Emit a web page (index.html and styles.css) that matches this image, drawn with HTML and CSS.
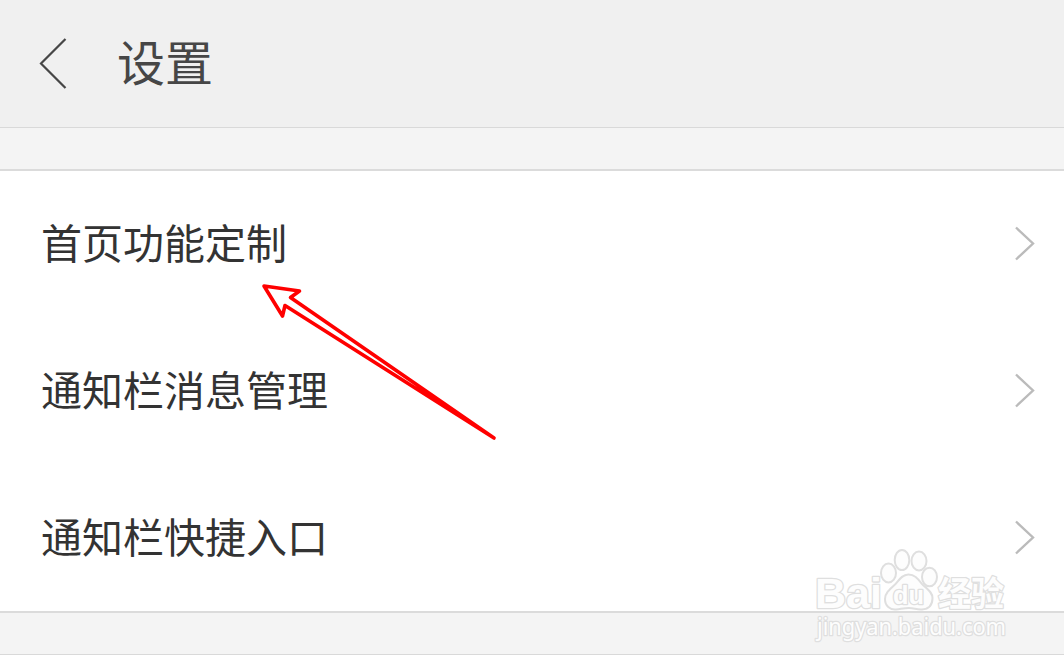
FILE: index.html
```html
<!DOCTYPE html>
<html lang="zh-CN">
<head>
  <title>设置</title>
  <meta charset="utf-8">
  <link rel="stylesheet" href="styles.css">
</head>
<body>

  <div class="header">
    <svg class="back" width="30" height="54" viewBox="0 0 30 54">
      <path d="M27.500 2 L3 26.500 L27.500 51"/>
    </svg>
    <h1>设置</h1>
  </div>

  <div class="spacer"></div>

  <ul class="settings-list">
    <li>
      <span>首页功能定制</span>
      <svg class="chevron" width="22" height="36" viewBox="0 0 22 36"><path d="M2 1.500 L19 17.500 L2 33.500"/></svg>
    </li>
    <li>
      <span>通知栏消息管理</span>
      <svg class="chevron" width="22" height="36" viewBox="0 0 22 36"><path d="M2 1.500 L19 17.500 L2 33.500"/></svg>
    </li>
    <li>
      <span>通知栏快捷入口</span>
      <svg class="chevron" width="22" height="36" viewBox="0 0 22 36"><path d="M2 1.500 L19 17.500 L2 33.500"/></svg>
    </li>
  </ul>

  <div class="spacer bottom"></div>

  <!-- Arrow pointing at the first item -->
  <svg class="arrow" width="240" height="162" viewBox="260 280 240 162">
    <path d="M494 438 L290.500 297.500 L299.500 291 L264 286 L282.500 316 L285 305.500 Z"/>
  </svg>

  <!-- Watermark -->
  <svg class="watermark" width="214" height="110" viewBox="810 545 214 110">
    <g class="mark">
      <text class="latin" x="815" y="608" textLength="67" lengthAdjust="spacingAndGlyphs">Bai</text>
      <ellipse cx="888.500" cy="573" rx="7.500" ry="9.500"/>
      <ellipse cx="902" cy="560" rx="7.300" ry="10"/>
      <ellipse cx="919" cy="561" rx="7.500" ry="9.500"/>
      <ellipse cx="929.500" cy="577" rx="7.500" ry="9.300"/>
      <path d="M908.500 574.500 C902 574.500 899 580 895.500 584 C890 589 885 593 885 599 C885 606 890 610 896 609.500 C901 609 904 608 909 608 C914 608 917 610 922 609.500 C929 609 932.500 605 932.500 598 C932.500 592 927 589 922 584 C918 579 915 574.500 908.500 574.500 Z"/>
      <text class="du" x="893" y="604" textLength="31" lengthAdjust="spacingAndGlyphs">du</text>
      <text class="cjk" x="938" y="606" textLength="66" lengthAdjust="spacingAndGlyphs">经验</text>
      <text class="url" x="817" y="635" textLength="189" lengthAdjust="spacingAndGlyphs">jingyan.baidu.com</text>
    </g>
  </svg>

</body>
</html>
```
FILE: styles.css
```css
/* General Page Styling */
body {
  font-family: "Noto Sans CJK SC", sans-serif;
  background-color: #fff;
  color: #333;
  margin: 0;
  position: relative;
  height: 664px;
  overflow: hidden;
}

svg {
  fill: none;
}

/* Header */
.header {
  display: flex;
  align-items: center;
  box-sizing: border-box;
  height: 128px;
  padding-left: 38px;
  background-color: #f0f0f0;
  border-bottom: 1px solid #d9d9d9;
}

h1 {
  margin: 0 0 0 49px;
  padding-bottom: 8px;
  font-size: 48px;
  font-weight: 400;
  line-height: 72px;
  color: #464646;
}

.back {
  stroke: #464646;
  stroke-width: 2.2;
}

.spacer {
  height: 41px;
  background-color: #f4f4f4;
}

.bottom {
  border-bottom: 1px solid #d9d9d9;
}

/* Settings List */
.settings-list {
  box-sizing: border-box;
  list-style-type: none;
  margin: 0;
  padding: 0;
  height: 444px;
  background-color: #fff;
  border-top: 2px solid #dbdbdb;
  border-bottom: 2px solid #dbdbdb;
}

li {
  display: flex;
  align-items: center;
  justify-content: space-between;
  box-sizing: border-box;
  height: 147px;
  padding: 0 28px 2px 41px;
  font-size: 41px;
  line-height: 60px;
}

li span {
  padding-bottom: 5px;
}

.chevron {
  stroke: #bbb;
  stroke-width: 2.4;
}

/* Arrow */
.arrow {
  position: absolute;
  left: 260px;
  top: 280px;
  stroke: #f00;
  stroke-width: 3.6;
  stroke-linejoin: round;
}

/* Watermark */
.watermark {
  position: absolute;
  left: 810px;
  top: 545px;
}

.mark {
  fill: #fdfdfd;
  stroke: #dfdfdf;
  stroke-width: 2;
  stroke-linejoin: round;
}

.mark text {
  paint-order: stroke;
  stroke-width: 2.6;
}

.mark .latin {
  font: 700 42px "Liberation Sans", sans-serif;
}

.mark .du {
  font: 700 25px "Liberation Sans", sans-serif;
}

.mark .cjk {
  font: 700 34px "Noto Sans CJK SC", sans-serif;
}

.mark .url {
  font: 400 23px "Noto Sans", sans-serif;
}
```
